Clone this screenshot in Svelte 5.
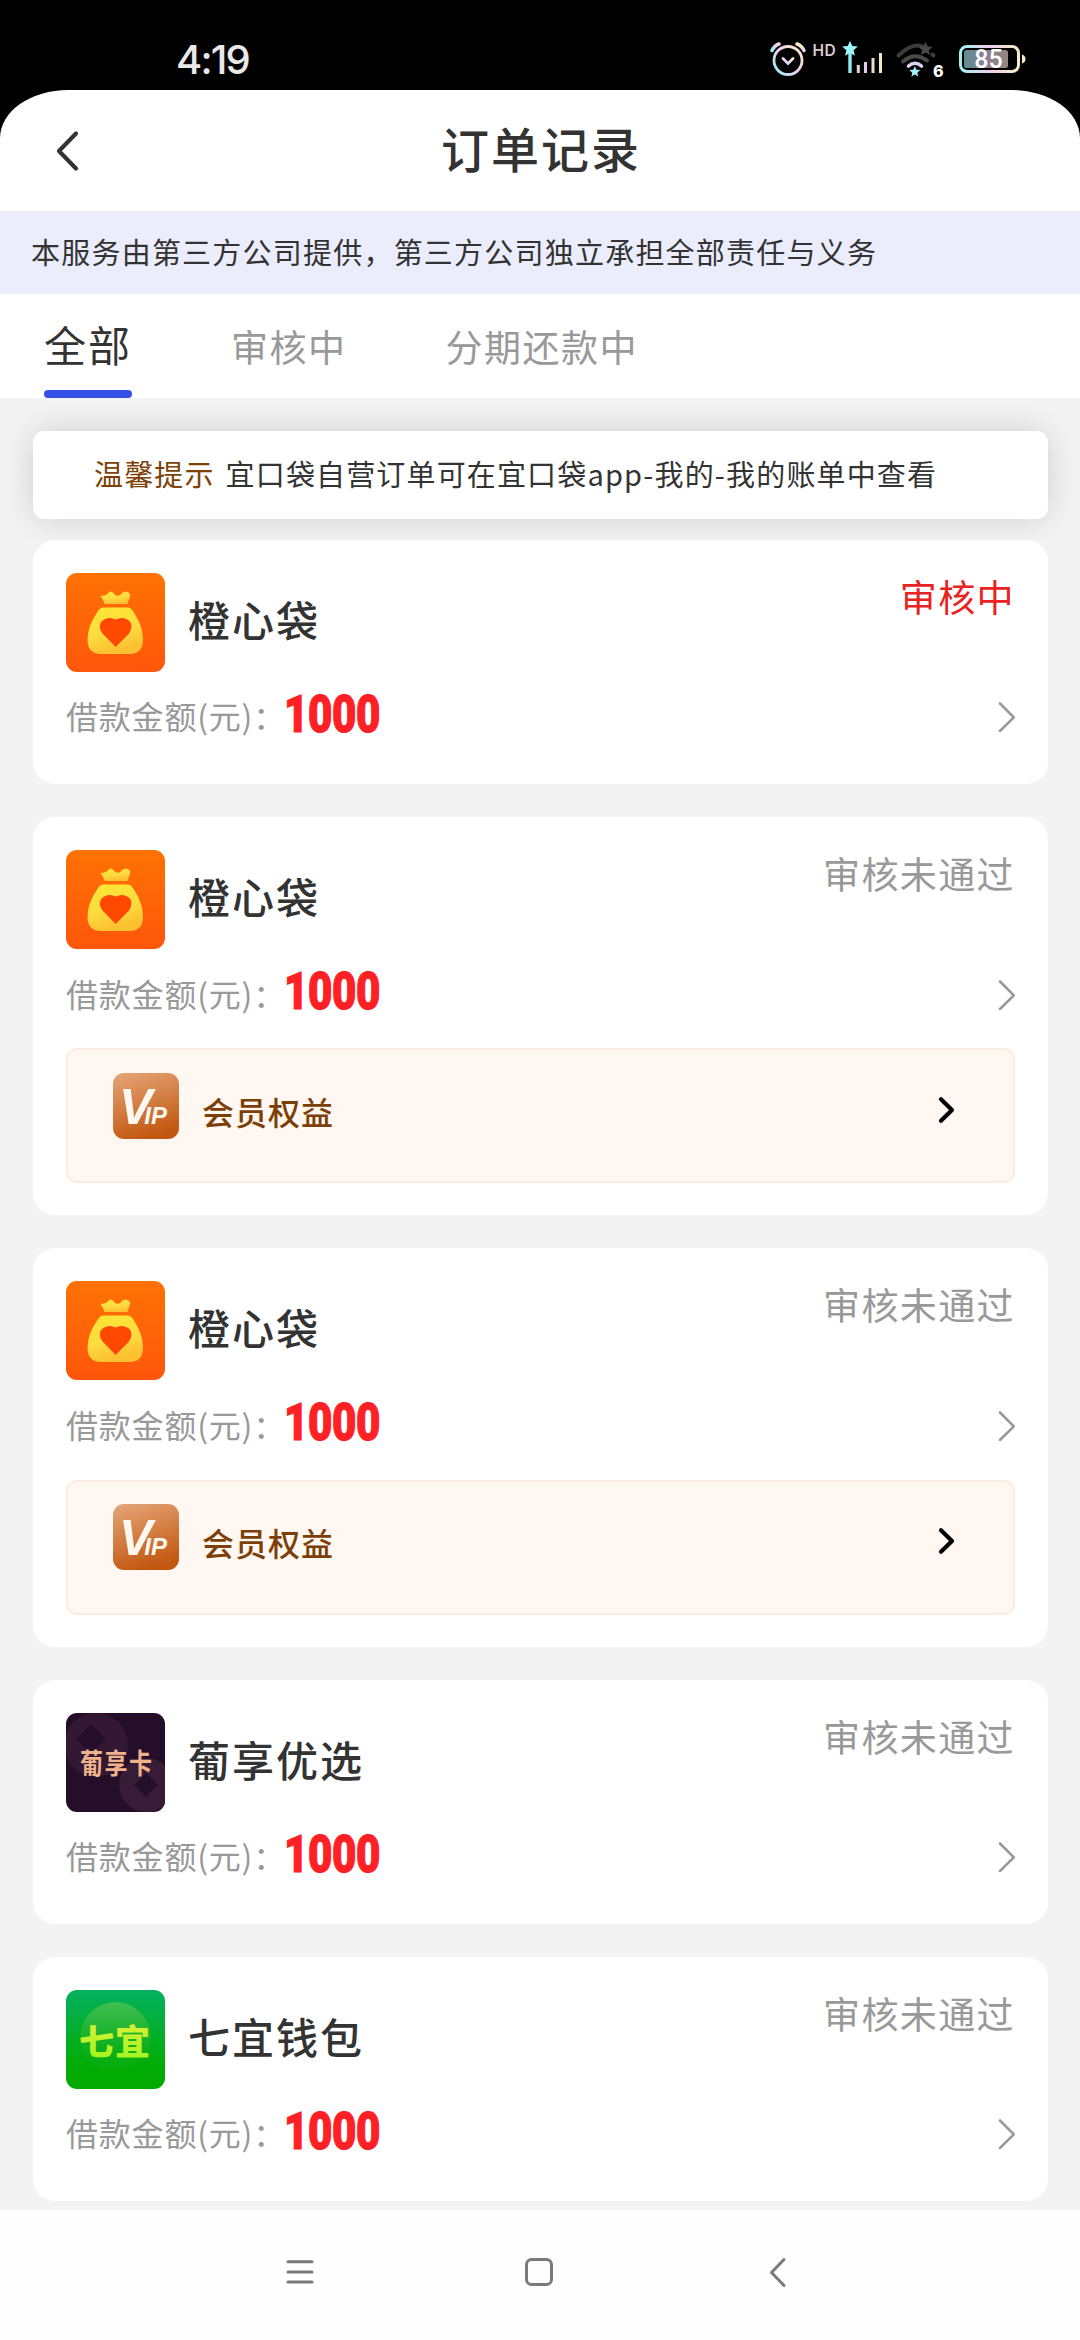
<script lang="ts">
	type Logo = 'bag' | 'grape' | 'qiyi';

	interface Order {
		name: string;
		logo: Logo;
		amount: number;
		status: string;
		pending?: boolean;
		vip?: boolean;
	}

	const tabs = ['全部', '审核中', '分期还款中'];
	let activeTab = $state(0);

	const orders: Order[] = [
		{ name: '橙心袋', logo: 'bag', amount: 1000, status: '审核中', pending: true },
		{ name: '橙心袋', logo: 'bag', amount: 1000, status: '审核未通过', vip: true },
		{ name: '橙心袋', logo: 'bag', amount: 1000, status: '审核未通过', vip: true },
		{ name: '葡享优选', logo: 'grape', amount: 1000, status: '审核未通过' },
		{ name: '七宜钱包', logo: 'qiyi', amount: 1000, status: '审核未通过' }
	];

	const star = 'M0-8 2.3-2.9 7.8-2.4 3.6 1.3 4.9 6.8 0 3.9-4.9 6.8-3.6 1.3-7.8-2.4-2.3-2.9Z';
</script>

<!-- Shared gradients -->
<svg class="defs" width="0" height="0" aria-hidden="true">
	<defs>
		<linearGradient id="iris" x1="0" y1="1" x2="1" y2="0">
			<stop offset="0" stop-color="#8ff3f5" />
			<stop offset="0.5" stop-color="#f3cdf0" />
			<stop offset="1" stop-color="#f6f0bd" />
		</linearGradient>
		<linearGradient id="battery" x1="0" y1="0" x2="1" y2="0">
			<stop offset="0" stop-color="#9df3f2" />
			<stop offset="0.5" stop-color="#f2cbe9" />
			<stop offset="1" stop-color="#f3edc4" />
		</linearGradient>
		<linearGradient id="charge" x1="0" y1="0" x2="1" y2="0">
			<stop offset="0" stop-color="#5f8f91" />
			<stop offset="0.5" stop-color="#8c7d94" />
			<stop offset="1" stop-color="#94877f" />
		</linearGradient>
		<linearGradient id="orange" x1="0" y1="0" x2="0" y2="1">
			<stop offset="0" stop-color="#ff7204" />
			<stop offset="1" stop-color="#ff560b" />
		</linearGradient>
		<linearGradient id="gold" x1="0" y1="0" x2="0.3" y2="1">
			<stop offset="0" stop-color="#ffe733" />
			<stop offset="0.6" stop-color="#fedb40" />
			<stop offset="1" stop-color="#fdc030" />
		</linearGradient>
		<linearGradient id="green" x1="0" y1="0" x2="0" y2="1">
			<stop offset="0" stop-color="#04b160" />
			<stop offset="0.75" stop-color="#02ac06" />
			<stop offset="1" stop-color="#02a900" />
		</linearGradient>
		<linearGradient id="glow" x1="0" y1="0" x2="0" y2="1">
			<stop offset="0" stop-color="#3fbe52" />
			<stop offset="0.6" stop-color="#12b021" />
			<stop offset="1" stop-color="#02ac06" />
		</linearGradient>
		<linearGradient id="lime" x1="0" y1="0" x2="0" y2="1">
			<stop offset="0" stop-color="#e6ee3c" />
			<stop offset="1" stop-color="#9bf51c" />
		</linearGradient>
		<linearGradient id="copper" x1="0.2" y1="0" x2="0.5" y2="1">
			<stop offset="0" stop-color="#e3a273" />
			<stop offset="1" stop-color="#c2570f" />
		</linearGradient>
	</defs>
</svg>

<div class="screen">
	<header class="status-bar">
		<span class="time">4:19</span>
		<svg class="indicators" width="272" height="44" viewBox="764 36 272 44">
			<g fill="none" stroke="url(#iris)" stroke-linecap="round">
				<circle cx="788" cy="60.5" r="14" stroke-width="2.8" />
				<path d="M783 58.5l5 5 5-5" stroke-width="2.8" />
				<path d="M772 50.5q2.5-5 7-6.5M804 50.5q-2.5-5-7-6.5" stroke-width="3.6" />
			</g>
			<text class="hd" x="812.5" y="56">HD</text>
			<path d="M850 50v23" stroke="#93e9f0" stroke-width="3.4" />
			<path d={star} transform="translate(850 49)" fill="#9af6fb" />
			<path d="M858.3 65v8" stroke="#dcd0ea" stroke-width="3" />
			<path d="M865.5 62v11" stroke="#e9cbe8" stroke-width="3" />
			<path d="M873 58v15" stroke="#eed9cf" stroke-width="3" />
			<path d="M880.5 53v20" stroke="#f0e8bf" stroke-width="3" />
			<g fill="none" stroke-linecap="round">
				<path d="M898.5 55.5q14-13 24-9M932.5 54.5l1 1" stroke="#3c3c3a" stroke-width="4" />
				<path d="M903 61.5q11.5-10 24-1" stroke="#4b484a" stroke-width="4" />
				<path d="M908.5 66q6.5-5.5 13 0" stroke="#dad2f2" stroke-width="3.6" />
			</g>
			<path d={star} transform="translate(925.5 49) scale(0.9)" fill="#4a4844" />
			<path d={star} transform="translate(914.8 71.8) scale(0.7)" fill="#a0f4fa" />
			<text class="wifi-gen" x="933" y="77">6</text>
			<rect x="960.5" y="46.5" width="58" height="25" rx="6.5" fill="none" stroke="url(#battery)" stroke-width="3" />
			<rect x="964" y="50" width="44" height="18" rx="2.5" fill="url(#charge)" />
			<path d="M1022 54.5q3.5 1 3.5 4.5t-3.5 4.5Z" fill="#f0ebc4" />
			<text class="charge" x="988.5" y="67.5">85</text>
		</svg>
	</header>

	<main class="sheet">
		<div class="title-bar">
			<svg class="back" width="30" height="44" viewBox="0 0 30 44">
				<path d="M24 4.5 7 22 24 39.5" />
			</svg>
			<h1>订单记录</h1>
		</div>

		<p class="notice">本服务由第三方公司提供，第三方公司独立承担全部责任与义务</p>

		<nav class="tabs">
			{#each tabs as tab, i}
				<button class="tab" class:active={i === activeTab} onclick={() => (activeTab = i)}>{tab}</button>
			{/each}
		</nav>

		<section class="list">
			<div class="tip">
				<span class="tip-label">温馨提示</span>
				<span>宜口袋自营订单可在宜口袋app-我的-我的账单中查看</span>
			</div>

			{#each orders as order}
				<article class="card">
					<div class="card-head">
						<svg class="logo" viewBox="0 0 99 99">
							{#if order.logo === 'bag'}
								<rect width="99" height="99" fill="url(#orange)" />
								<path
									d="M34.5 23q5.5 0 9-4.3 2.5-.8 5.5 3 2.5 2.3 5.5 0 3-3.6 6-3 3.5.5 3.7 3.5-1 5-3 8.8H38.5q-.8-3.8-4-8Z"
									fill="url(#gold)"
								/>
								<path
									d="M37 34.5h25q3.5 0 6.5 6 8.5 13 8.5 26.5 0 14-14 14H35.5q-14 0-14-14 0-13.5 9-26.5 3-6 6.5-6Z"
									fill="url(#gold)"
								/>
								<path
									d="M49.7 74 36.5 60.5Q31.5 54 35.5 48.5 42 42.5 49.7 46.5 57.5 42.5 64 48.5 67.5 54 63 60.5Z"
									fill="#ff4800"
								/>
							{:else if order.logo === 'grape'}
								<rect width="99" height="99" fill="#250e29" />
								<circle cx="30" cy="32" r="32" fill="#321833" />
								<path d="M25 11 40 26 25 41 10 26Z" fill="#250e29" />
								<circle cx="80" cy="72" r="27" fill="#361c36" />
								<path d="M80 60 92 72 80 84 68 72Z" fill="#250e29" />
								<text class="grape-text" transform="translate(14 61) scale(1 1.22)">葡享卡</text>
							{:else}
								<rect width="99" height="99" fill="url(#green)" />
								<circle cx="49.5" cy="47" r="35" fill="url(#glow)" />
								<text class="qiyi-text" x="13" y="65">七宜</text>
							{/if}
						</svg>
						<h2>{order.name}</h2>
						<span class="status" class:pending={order.pending}>{order.status}</span>
					</div>

					<div class="card-row">
						<span class="label">借款金额(元)：</span>
						<span class="amount">{order.amount}</span>
						<svg class="more" width="20" height="32" viewBox="0 0 20 32">
							<path d="M5 3.5 18.8 17.3 5 31" />
						</svg>
					</div>

					{#if order.vip}
						<div class="vip">
							<svg class="vip-icon" viewBox="0 0 66 66">
								<rect width="66" height="66" fill="url(#copper)" />
								<text class="vip-v" x="6" y="51">V<tspan class="vip-ip" dx="-8">IP</tspan></text>
							</svg>
							<span class="vip-text">会员权益</span>
							<svg class="vip-more" width="20" height="30" viewBox="0 0 20 30">
								<path d="M4 4.3 15 15 4 25.7" />
							</svg>
						</div>
					{/if}
				</article>
			{/each}
		</section>
	</main>

	<footer class="nav-bar">
		<svg width="40" height="40" viewBox="0 0 40 40">
			<path d="M8 9.7h24M8 20h24M8 30h24" />
		</svg>
		<svg width="40" height="40" viewBox="0 0 40 40">
			<rect x="7.5" y="7.5" width="25" height="25" rx="5" />
		</svg>
		<svg width="40" height="40" viewBox="0 0 40 40">
			<path d="M26 7.5 13.5 20.5 26 33.5" />
		</svg>
	</footer>
</div>

<style>
	:global(body) {
		margin: 0;
		background: #000;
	}

	.defs {
		position: absolute;
	}

	.screen {
		display: flex;
		flex-direction: column;
		width: 1080px;
		height: 2340px;
		overflow: hidden;
		background: #000;
		color: #333;
		font-family: 'Noto Sans CJK SC', 'Noto Sans', sans-serif;
	}

	/* Status bar */
	.status-bar {
		display: flex;
		flex: none;
		justify-content: space-between;
		box-sizing: border-box;
		height: 90px;
		padding: 36px 44px 0 176px;
	}

	.time {
		color: #e8e8e8;
		font: 500 40px/47px Inter, sans-serif;
		letter-spacing: -1.8px;
	}

	.hd {
		fill: #d8c9cf;
		font: 600 15.5px Inter, sans-serif;
		letter-spacing: 0.5px;
	}

	.wifi-gen {
		fill: #fff;
		font: 800 16px Inter, sans-serif;
	}

	.charge {
		fill: #fff;
		font: 500 25px Roboto, sans-serif;
		text-anchor: middle;
	}

	/* App sheet */
	.sheet {
		display: flex;
		flex: 1;
		flex-direction: column;
		min-height: 0;
		overflow: hidden;
		border-radius: 68px 68px 0 0 / 48px 48px 0 0;
		background: #fff;
	}

	.title-bar {
		display: grid;
		flex: none;
		grid-template-columns: 52px 1fr 52px;
		align-items: center;
		height: 121px;
	}

	.back {
		justify-self: end;
		margin-right: -30px;
	}

	.back path {
		fill: none;
		stroke: #333;
		stroke-width: 4.2;
		stroke-linecap: round;
		stroke-linejoin: round;
	}

	h1 {
		margin: 0;
		padding: 0 0 8px 2px;
		font-size: 48px;
		font-weight: 500;
		letter-spacing: 2px;
		line-height: 60px;
		text-align: center;
	}

	.notice {
		flex: none;
		height: 83px;
		margin: 0;
		padding-left: 31px;
		background: #ebedfd;
		font-size: 29px;
		letter-spacing: 1.22px;
		line-height: 80px;
		white-space: nowrap;
	}

	.tabs {
		display: flex;
		flex: none;
		gap: 99px;
		height: 104px;
		padding-left: 44px;
	}

	.tab {
		box-sizing: border-box;
		height: 104px;
		padding: 0;
		border: 0;
		background: none;
		color: #999;
		font-family: inherit;
		font-size: 37px;
		letter-spacing: 1.5px;
		line-height: 104px;
	}

	.tab.active {
		position: relative;
		padding-bottom: 4px;
		color: #333;
		font-size: 42px;
		letter-spacing: 2px;
		line-height: 100px;
	}

	.tab.active::after {
		position: absolute;
		right: 0;
		bottom: 0;
		left: 0;
		height: 8px;
		border-radius: 4px;
		background: #3551e5;
		content: '';
	}

	/* Orders */
	.list {
		display: flex;
		flex: 1;
		flex-direction: column;
		gap: 33px;
		min-height: 0;
		padding: 33px 32px 0 33px;
		overflow: hidden;
		background: #f3f3f3;
	}

	.tip {
		display: flex;
		flex: none;
		gap: 11px;
		height: 88px;
		margin-bottom: -12.4px;
		padding-left: 61px;
		border-radius: 11px;
		background: #fff;
		box-shadow: 0 0 33px rgba(0, 0, 0, 0.15);
		font-size: 29px;
		letter-spacing: 1.15px;
		line-height: 84px;
		white-space: nowrap;
	}

	.tip-label {
		color: #7c4207;
	}

	.card {
		position: relative;
		flex: none;
		padding: 33px;
		border-radius: 22px;
		background: #fff;
	}

	.card-head {
		display: flex;
		align-items: flex-start;
		height: 99px;
	}

	.logo {
		flex: none;
		width: 99px;
		height: 99px;
		border-radius: 11px;
	}

	.grape-text {
		fill: #efb28a;
		font-size: 23px;
		font-weight: 700;
		letter-spacing: 1.5px;
	}

	.qiyi-text {
		fill: url(#lime);
		font-size: 35px;
		font-weight: 900;
		letter-spacing: 1px;
	}

	h2 {
		flex: 1;
		margin: 0 0 0 23px;
		font-size: 42px;
		font-weight: 500;
		letter-spacing: 2px;
		line-height: 92px;
	}

	.status {
		color: #999;
		font-size: 37px;
		letter-spacing: 1.4px;
		line-height: 47px;
	}

	.status.pending {
		color: #e92222;
	}

	.card-row {
		display: flex;
		align-items: center;
		height: 69.3px;
		margin-top: 10px;
	}

	.label {
		margin-right: -2px;
		padding-bottom: 2px;
		color: #999;
		font-size: 32px;
		letter-spacing: 0.8px;
		line-height: 64px;
	}

	.amount {
		flex: 1;
		padding-bottom: 3px;
		color: #fd2125;
		font: 900 52px/60px Roboto, sans-serif;
		letter-spacing: -0.5px;
		transform: scaleX(0.81);
		transform-origin: left;
		-webkit-text-stroke: 1.2px #fd2125;
	}

	.more path {
		fill: none;
		stroke: #999;
		stroke-width: 2.6;
		stroke-linecap: round;
	}

	.vip {
		display: flex;
		align-items: flex-start;
		box-sizing: border-box;
		height: 135px;
		margin: 20px 0 -1px;
		padding: 22.5px 56px 0 45px;
		border: 2px solid #faece1;
		border-radius: 11px;
		background: #fff7f1;
	}

	.vip-icon {
		width: 66px;
		height: 66px;
		border-radius: 11px;
	}

	.vip-v {
		fill: #fff8f0;
		font: italic 700 50px 'Liberation Sans', sans-serif;
	}

	.vip-ip {
		font-size: 24px;
	}

	.vip-text {
		flex: 1;
		margin: 5px 0 0 23px;
		color: #7c3f07;
		font-size: 32px;
		font-weight: 500;
		letter-spacing: 1px;
		line-height: 66px;
	}

	.vip-more {
		margin-top: 22px;
	}

	.vip-more path {
		fill: none;
		stroke: #000;
		stroke-width: 4.2;
		stroke-linecap: round;
		stroke-linejoin: round;
	}

	/* System navigation */
	.nav-bar {
		display: flex;
		flex: none;
		gap: 199px;
		justify-content: center;
		box-sizing: border-box;
		height: 130px;
		padding: 42px 3px 0 0;
		background: #fefefe;
	}

	.nav-bar svg * {
		fill: none;
		stroke: #7a7a7a;
		stroke-width: 3;
		stroke-linecap: round;
		stroke-linejoin: round;
	}
</style>
